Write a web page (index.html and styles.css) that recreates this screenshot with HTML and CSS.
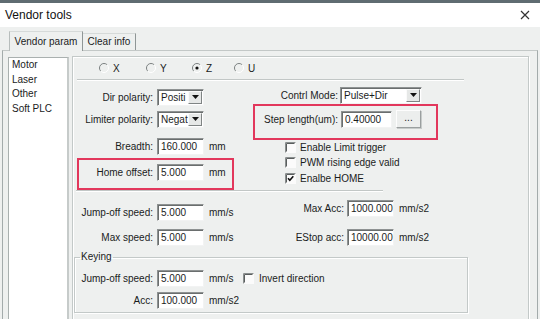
FILE: index.html
```html
<!DOCTYPE html>
<html>
<head>
<meta charset="utf-8">
<link rel="stylesheet" href="styles.css">
</head>
<body>
<div class="win">
  <div class="strip"></div>
  <div class="titlebar">
    <span class="title">Vendor tools</span>
    <svg class="close" viewBox="0 0 10 10" width="10" height="10"><path d="M1 1L9 9M9 1L1 9" stroke="#333" stroke-width="1.2" fill="none"/></svg>
  </div>
  <div class="tabs">
    <div class="tab active">Vendor param</div>
    <div class="tab">Clear info</div>
  </div>
  <div class="tabpanel">
    <ul class="list">
      <li>Motor</li>
      <li>Laser</li>
      <li>Other</li>
      <li>Soft PLC</li>
    </ul>
    <div class="group">
      <div class="radios">
        <label class="radio w47"><svg class="rb" viewBox="0 0 10 10"><path d="M8.2 1.8A4.5 4.5 0 0 0 1.8 8.2" fill="none" stroke="#7c8282"/><path d="M8.2 1.8A4.5 4.5 0 0 1 1.8 8.2" fill="none" stroke="#fff"/></svg>X</label>
        <label class="radio w46"><svg class="rb" viewBox="0 0 10 10"><path d="M8.2 1.8A4.5 4.5 0 0 0 1.8 8.2" fill="none" stroke="#7c8282"/><path d="M8.2 1.8A4.5 4.5 0 0 1 1.8 8.2" fill="none" stroke="#fff"/></svg>Y</label>
        <label class="radio w42"><svg class="rb" viewBox="0 0 10 10"><path d="M8.2 1.8A4.5 4.5 0 0 0 1.8 8.2" fill="none" stroke="#7c8282"/><path d="M8.2 1.8A4.5 4.5 0 0 1 1.8 8.2" fill="none" stroke="#fff"/><circle cx="5" cy="5" r="1.6" fill="#111"/></svg>Z</label>
        <label class="radio"><svg class="rb" viewBox="0 0 10 10"><path d="M8.2 1.8A4.5 4.5 0 0 0 1.8 8.2" fill="none" stroke="#7c8282"/><path d="M8.2 1.8A4.5 4.5 0 0 1 1.8 8.2" fill="none" stroke="#fff"/></svg>U</label>
      </div>
      <div class="sep sep1"></div>
      <div class="upper">
        <div class="col lcol">
          <div class="row r-dir"><span class="lbl">Dir polarity:</span><span class="combo c-small"><span class="cval">Positi</span><span class="dbtn"><svg viewBox="0 0 7 4" width="7" height="4"><path d="M0 0H7L3.5 4Z" fill="#111"/></svg></span></span></div>
          <div class="row r-lim"><span class="lbl">Limiter polarity:</span><span class="combo c-small"><span class="cval">Negat</span><span class="dbtn"><svg viewBox="0 0 7 4" width="7" height="4"><path d="M0 0H7L3.5 4Z" fill="#111"/></svg></span></span></div>
          <div class="row r-br"><span class="lbl">Breadth:</span><span class="inp">160.000</span><span class="unit">mm</span></div>
          <div class="row r-home"><span class="lbl">Home offset:</span><span class="inp">5.000</span><span class="unit">mm</span><span class="hl hl-home"></span></div>
        </div>
        <div class="col rcol">
          <div class="row r-mode"><span class="lbl rl">Contrl Mode:</span><span class="combo c-wide"><span class="cval">Pulse+Dir</span><span class="dbtn"><svg viewBox="0 0 7 4" width="7" height="4"><path d="M0 0H7L3.5 4Z" fill="#111"/></svg></span></span></div>
          <div class="row r-step"><span class="lbl rl rl2">Step length(um):</span><span class="inp i-step">0.40000</span><span class="btn">...</span><span class="hl hl-step"></span></div>
          <div class="chk c1"><svg class="cb" viewBox="0 0 11 11"><rect x="0" y="0" width="11" height="11" fill="#fbfbfb"/><path d="M0.5 10.5V0.5H10.5" stroke="#8a8f8f" fill="none"/><path d="M1.5 9.5V1.5H9.5" stroke="#5a5e5e" fill="none"/></svg><span>Enable Limit trigger</span></div>
          <div class="chk c2"><svg class="cb" viewBox="0 0 11 11"><rect x="0" y="0" width="11" height="11" fill="#fbfbfb"/><path d="M0.5 10.5V0.5H10.5" stroke="#8a8f8f" fill="none"/><path d="M1.5 9.5V1.5H9.5" stroke="#5a5e5e" fill="none"/></svg><span>PWM rising edge valid</span></div>
          <div class="chk c3"><svg class="cb" viewBox="0 0 11 11"><rect x="0" y="0" width="11" height="11" fill="#fbfbfb"/><path d="M0.5 10.5V0.5H10.5" stroke="#8a8f8f" fill="none"/><path d="M1.5 9.5V1.5H9.5" stroke="#5a5e5e" fill="none"/><path d="M3 5.2L4.8 7.2L8.3 3.3" stroke="#111" stroke-width="1.6" fill="none"/></svg><span>Enalbe HOME</span></div>
        </div>
      </div>
      <div class="sep sep2"></div>
      <div class="lower">
        <div class="col lcol">
          <div class="row r-jump"><span class="lbl">Jump-off speed:</span><span class="inp">5.000</span><span class="unit">mm/s</span></div>
          <div class="row r-max"><span class="lbl">Max speed:</span><span class="inp">5.000</span><span class="unit">mm/s</span></div>
        </div>
        <div class="col rcol">
          <div class="row r-macc"><span class="lbl ll">Max Acc:</span><span class="inp i-acc">1000.000</span><span class="unit">mm/s2</span></div>
          <div class="row r-estop"><span class="lbl ll">EStop acc:</span><span class="inp i-acc">10000.00</span><span class="unit">mm/s2</span></div>
        </div>
      </div>
      <fieldset class="keying">
        <legend>Keying</legend>
        <div class="row k1"><span class="lbl kl">Jump-off speed:</span><span class="inp">5.000</span><span class="unit ku">mm/s</span><svg class="cb" viewBox="0 0 11 11"><rect x="0" y="0" width="11" height="11" fill="#fbfbfb"/><path d="M0.5 10.5V0.5H10.5" stroke="#8a8f8f" fill="none"/><path d="M1.5 9.5V1.5H9.5" stroke="#5a5e5e" fill="none"/></svg><span class="ktxt">Invert direction</span></div>
        <div class="row k2"><span class="lbl kl">Acc:</span><span class="inp">100.000</span><span class="unit">mm/s2</span></div>
      </fieldset>
    </div>
  </div>
</div>
</body>
</html>
```
FILE: styles.css
```css
* { box-sizing: border-box; margin: 0; padding: 0; }
body {
  margin: 0;
  font-family: "Liberation Sans", Arial, sans-serif;
  font-size: 10px;
  color: #1a1c1c;
  background: #eef0ef;
}
.win {
  width: 540px;
  height: 319px;
  overflow: hidden;
  background: #eef0ef;
  display: flex;
  flex-direction: column;
}
.strip { height: 3px; flex: none; background: #5f6c71; }
.titlebar {
  height: 24px;
  flex: none;
  background: #fff;
  display: flex;
  align-items: center;
  justify-content: space-between;
  padding: 0 10px 0 5px;
}
.title { font-size: 12px; color: #111; }
.close { display: block; }

.tabs {
  height: 23px;
  flex: none;
  display: flex;
  align-items: flex-end;
  padding-left: 9px;
}
.tab {
  height: 17px;
  line-height: 16px;
  text-align: center;
  border: 1px solid #b7bdbc;
  border-bottom: none;
  border-top-color: #d6dad9;
  background: #eef0ef;
}
.tab.active {
  width: 74px;
  height: 20px;
  line-height: 19px;
  margin-bottom: -1px;
  position: relative;
  z-index: 1;
  border-right-color: #8f9696;
}
.tab:not(.active) {
  width: 53px;
  border-left: none;
  border-right-color: #8f9696;
}

.tabpanel {
  flex: 1;
  margin-left: 2px;
  width: 536px;
  border: 1px solid #a3abab;
  border-bottom: none;
  border-top-color: #c3c8c7;
  display: flex;
  align-items: flex-start;
  padding-top: 5px;
}
.list {
  list-style: none;
  margin-left: 5px;
  margin-top: 1px;
  width: 61px;
  height: 270px;
  background: #fff;
  border: 1px solid #a9b0af;
  border-right: 2px solid #c6cbca;
  padding: 0 0 0 3px;
  line-height: 14.6px;
}

.group {
  margin-left: 3px;
  width: 457px;
  height: 270px;
  border: 1px solid #c3c9c8;
  box-shadow: inset 1px 1px 0 #fff, 1px 1px 0 #fff;
}

.radios {
  height: 22px;
  display: flex;
  align-items: center;
  padding-left: 26px;
}
.radio { display: flex; align-items: center; gap: 4px; }
.radio.w47 { width: 47px; }
.radio.w46 { width: 46px; }
.radio.w42 { width: 42px; }
.rb { width: 10px; height: 10px; display: block; }

.sep {
  height: 2px;
  border-top: 1px solid #c2c7c6;
  border-bottom: 1px solid #fff;
}
.sep1 { margin-left: 4px; width: 387px; }
.sep2 { margin-left: 3px; width: 307px; }

.upper { height: 109px; display: flex; }
.lower { height: 59px; display: flex; }
.col { display: flex; flex-direction: column; }
.lcol { width: 177px; }
.rcol { flex: 1; }

.row {
  display: flex;
  align-items: center;
  height: 18px;
  position: relative;
}
.lbl {
  width: 80px;
  margin-right: 4px;
  text-align: right;
  white-space: nowrap;
}
.rl { width: 88px; margin-right: 2px; }
.rl2 { margin-right: 3px; }
.ll { width: 94px; margin-right: 3px; }
.kl { width: 78px; }

.r-dir { margin-top: 7px; }
.r-lim { margin-top: 4px; }
.r-br { margin-top: 9px; }
.r-home { margin-top: 8px; }
.r-mode { margin-top: 5px; }
.r-step { margin-top: 6px; }
.r-jump { margin-top: 11px; }
.r-max { margin-top: 7px; }
.r-macc { margin-top: 7px; }
.r-estop { margin-top: 11px; }

.inp {
  width: 47px;
  height: 17px;
  line-height: 15px;
  padding-left: 3px;
  background: #fff;
  border: 1px solid;
  border-color: #8e9292 #f2f3f3 #f2f3f3 #8e9292;
  box-shadow: inset 1px 1px 0 #6a6e6e;
  white-space: nowrap;
}
.i-step { width: 51px; }
.i-acc { width: 47px; }
.unit { margin-left: 5px; }

.combo {
  height: 17px;
  display: flex;
  background: #fff;
  border: 1px solid;
  border-color: #8e9292 #f2f3f3 #f2f3f3 #8e9292;
  box-shadow: inset 1px 1px 0 #6a6e6e;
  padding: 1px 1px 1px 2px;
}
.c-small { width: 47px; }
.c-wide { width: 82px; }
.cval {
  flex: 1;
  white-space: nowrap;
  line-height: 13px;
  padding-left: 1px;
}
.dbtn {
  width: 14px;
  height: 13px;
  flex: none;
  background: #e6e8e7;
  border: 1px solid;
  border-color: #fafafa #7f8484 #7f8484 #fafafa;
  display: flex;
  align-items: center;
  justify-content: center;
}
.dbtn svg { display: block; }

.btn {
  margin-left: 4px;
  width: 25px;
  height: 18px;
  line-height: 14px;
  text-align: center;
  background: #eceeed;
  border: 1px solid;
  border-color: #fdfdfd #9a9f9f #9a9f9f #fdfdfd;
  box-shadow: 1px 1px 0 #c7cbca;
}

.hl {
  position: absolute;
  border: 2px solid #e2375c;
  pointer-events: none;
}
.hl-home { left: 4px; width: 157px; top: -5px; bottom: -9px; }
.hl-step { left: 3px; width: 185px; top: -6px; bottom: -12px; }

.chk {
  display: flex;
  align-items: center;
  height: 15px;
  padding-left: 35px;
  gap: 4px;
}
.c1 { margin-top: 12px; }
.c3 { height: 16px; }
.cb { width: 11px; height: 11px; display: block; flex: none; }

.keying {
  margin-left: 1px;
  width: 394px;
  border: 1px solid #c3c9c8;
  box-shadow: inset 1px 1px 0 #fff, 1px 1px 0 #fff;
  padding: 0 0 3px 0;
}
.keying legend {
  margin-left: 5px;
  padding: 0 1px;
  line-height: 12px;
  font-size: 10px;
}
.k1 { margin-top: 6px; }
.k2 { margin-top: 4px; }
.ku { width: 34px; }
.ktxt { margin-left: 5px; }
```
